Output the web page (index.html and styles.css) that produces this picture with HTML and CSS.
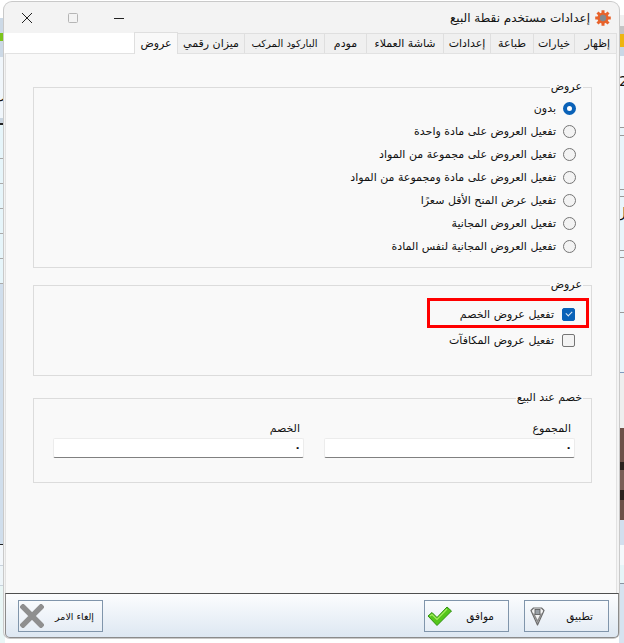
FILE: index.html
```html
<!DOCTYPE html>
<html lang="ar">
<head>
<meta charset="utf-8">
<title>إعدادات مستخدم نقطة البيع</title>
<link rel="stylesheet" href="styles.css">
</head>
<body>
<div class="desktop">
  <div class="strip strip-left"><span class="frag frag-l">ل</span></div>
  <div class="strip strip-right"><span class="frag frag-two">2</span><span class="frag frag-j">ل</span></div>

  <main class="window" dir="rtl">
    <header class="titlebar">
      <svg class="gear" viewBox="0 0 16 16" aria-hidden="true">
        <g stroke="#e8622a" stroke-width="3" stroke-linecap="butt">
          <path d="M8 0.2V15.8M0.2 8H15.8M2.5 2.5L13.5 13.5M13.5 2.5L2.5 13.5"/>
        </g>
        <circle cx="8" cy="8" r="5.6" fill="#e8622a"/>
        <circle cx="8" cy="8" r="3.2" fill="#85888d"/>
      </svg>
      <h1 class="title">إعدادات مستخدم نقطة البيع</h1>
      <div class="winctl">
        <svg class="ctl" viewBox="-17 0 46 12" aria-hidden="true"><path d="M1 6.5H11" stroke="#222" stroke-width="1" fill="none"/></svg>
        <svg class="ctl" viewBox="-17 0 46 12" aria-hidden="true"><rect x="1.5" y="1.5" width="9" height="9" rx="1" fill="none" stroke="#b5b5b5"/></svg>
        <svg class="ctl" viewBox="-17 0 46 12" aria-hidden="true"><path d="M1 1L11 11M11 1L1 11" stroke="#222" stroke-width="1" fill="none"/></svg>
      </div>
    </header>

    <nav class="tabs">
      <span class="tab">إظهار</span>
      <span class="tab">خيارات</span>
      <span class="tab">طباعة</span>
      <span class="tab">إعدادات</span>
      <span class="tab">شاشة العملاء</span>
      <span class="tab">مودم</span>
      <span class="tab tab-narrow">الباركود المركب</span>
      <span class="tab">ميزان رقمي</span>
      <span class="tab tab-active">عروض</span>
    </nav>

    <section class="panel">
      <fieldset class="group group-radio">
        <legend>عروض</legend>
        <label class="opt"><input type="radio" name="offer" checked><span>بدون</span></label>
        <label class="opt"><input type="radio" name="offer"><span>تفعيل العروض على مادة واحدة</span></label>
        <label class="opt"><input type="radio" name="offer"><span>تفعيل العروض على مجموعة من المواد</span></label>
        <label class="opt"><input type="radio" name="offer"><span>تفعيل العروض على مادة ومجموعة من المواد</span></label>
        <label class="opt"><input type="radio" name="offer"><span>تفعيل عرض المنح الأقل سعرًا</span></label>
        <label class="opt"><input type="radio" name="offer"><span>تفعيل العروض المجانية</span></label>
        <label class="opt"><input type="radio" name="offer"><span>تفعيل العروض المجانية لنفس المادة</span></label>
      </fieldset>

      <fieldset class="group group-check">
        <legend>عروض</legend>
        <label class="opt opt-check"><input type="checkbox" checked><span>تفعيل عروض الخصم</span><i class="redbox"></i></label>
        <label class="opt opt-check"><input type="checkbox"><span>تفعيل عروض المكافآت</span></label>
      </fieldset>

      <fieldset class="group group-fields">
        <legend>خصم عند البيع</legend>
        <div class="field">
          <label class="field-label">المجموع</label>
          <div class="input">٠</div>
        </div>
        <div class="field">
          <label class="field-label">الخصم</label>
          <div class="input">٠</div>
        </div>
      </fieldset>
    </section>

    <footer class="footer">
      <button class="btn btn-apply" type="button">
        <svg class="ico-apply" viewBox="0 0 15 19" aria-hidden="true">
          <path d="M1 3.5L3.5 1H11.5L14 3.5L7.5 18Z" fill="#f4f4f4" stroke="#6a6a6a" stroke-width="1.2" stroke-linejoin="round"/>
          <path d="M3.5 6.5L7.5 14.5L11.5 6.5" fill="none" stroke="#8a8a8a" stroke-width="1.5"/>
          <rect x="5" y="2.5" width="5" height="5" fill="#9aa0a6" stroke="#555" stroke-width=".8"/>
        </svg>
        <span>تطبيق</span>
      </button>
      <button class="btn btn-ok" type="button">
        <svg class="ico-ok" viewBox="0 0 25 20" aria-hidden="true">
          <path d="M1 10L5 6.5L10 11.5L20 1L24.5 5L10 19.5Z" fill="#55c61a" stroke="#2f8f10" stroke-width="1" stroke-linejoin="round"/>
          <path d="M3 10L5 8.5L10 13.5L20 3" fill="none" stroke="#a5ec5f" stroke-width="1.2"/>
        </svg>
        <span>موافق</span>
      </button>
      <button class="btn btn-cancel" type="button">
        <svg class="ico-x" viewBox="0 0 24 24" aria-hidden="true">
          <path d="M3 3L21 21M21 3L3 21" stroke="#8f8f8f" stroke-width="5.4" stroke-linecap="square" fill="none"/>
        </svg>
        <span>إلغاء الامر</span>
      </button>
    </footer>
  </main>
</div>
</body>
</html>
```
FILE: styles.css
```css
* { box-sizing: border-box; }
html, body { margin: 0; padding: 0; }
body {
  width: 624px;
  height: 643px;
  overflow: hidden;
  background: #fff;
  font-family: "DejaVu Sans", "Noto Sans", sans-serif;
  font-size: 11px;
  color: #111;
}
.desktop { position: relative; width: 624px; height: 643px; overflow: hidden; }

.strip { position: absolute; top: 0; width: 5px; height: 643px; overflow: hidden; }
.strip-left {
  left: 0;
  background: linear-gradient(to bottom,
    #fff 0 18px, #ccd9e6 18px 33px, #7cc41c 33px 41px, #ccd9e6 41px 57px,
    #f0f6fb 57px 118px, #c9d5e0 118px 123px, #222 123px 125px,
    #e6f5fa 125px 158px, #aaa 158px 159px, #e6f5fa 159px 183px, #aaa 183px 184px,
    #e6f5fa 184px 208px, #aaa 208px 209px, #e6f5fa 209px 233px, #aaa 233px 234px,
    #e6f5fa 234px 258px, #aaa 258px 259px, #e6f5fa 259px 283px, #aaa 283px 284px,
    #d0deec 284px 544px, #222 544px 545px, #f3f7fb 545px 565px, #c8d2dc 565px 566px,
    #eef5f9 566px 585px, #c8d2dc 585px 586px, #e9f6f6 586px 643px);
}
.strip-right {
  right: 0;
  background: linear-gradient(to bottom,
    #fff 0 15px, #f0f0f0 15px 26px, #c4c4c4 26px 34px, #eeb510 34px 47px, #c9d7e6 47px 56px,
    #f5f9fd 56px 127px, #999 127px 128px, #e9f5fb 128px 135px, #999 135px 136px,
    #e9f5fb 136px 189px, #999 189px 190px, #e9f5fb 190px 196px, #999 196px 197px,
    #e9f5fb 197px 250px, #999 250px 251px, #e9f5fb 251px 257px, #999 257px 258px,
    #e9f5fb 258px 312px, #999 312px 313px, #e9f5fb 313px 372px, #7f99bd 372px 373px,
    #eeeeee 373px 428px, #6d5048 428px 462px, #2c211e 462px 470px, #7a5d55 470px 490px,
    #2c211e 490px 500px, #6d5048 500px 520px, #d2dfee 520px 545px, #f4f9fc 545px 565px,
    #e5f5f8 565px 583px, #8a94a0 583px 584px, #d6e3f0 584px 643px);
}
.frag { position: absolute; left: -1px; font-size: 14px; line-height: 16px; color: #111; }
.frag-l { top: 86px; left: -4px; }
.frag-two { top: 73px; left: 0; }
.frag-j { top: 205px; left: -3px; }

.window {
  position: absolute;
  left: 4px;
  top: 2px;
  width: 615px;
  height: 636px;
  display: flex;
  flex-direction: column;
  background: #f3f3f3;
  border-radius: 8px 8px 6px 6px;
  box-shadow: 0 0 0 1px #c9c9c9;
}

.titlebar {
  height: 31px;
  flex: none;
  display: flex;
  align-items: center;
  padding: 0 8px 0 0;
  gap: 5px;
}
.gear { width: 16px; height: 16px; flex: none; }
.title { margin: 0; font-size: 12px; font-weight: 400; line-height: 18px; color: #111; white-space: nowrap; }
.winctl { margin-right: auto; display: flex; }
.ctl { width: 46px; height: 12px; display: block; }

.tabs {
  flex: none;
  height: 20px;
  margin-right: 2px;
  display: grid;
  grid-template-columns: 42px 41px 43px 47px 77px 42px 80px 67px 44px 1fr;
  background: linear-gradient(to left, transparent 483px, #fff 483px);
}
.tab {
  display: flex;
  align-items: center;
  justify-content: center;
  font-size: 11px;
  line-height: 14px;
  white-space: nowrap;
  overflow: hidden;
  background: #f0f0f0;
  border: 1px solid #dfdfdf;
  border-left: 0;
  border-bottom: 0;
}
.tab:first-child { justify-content: flex-start; padding-right: 6px; }
.tab-narrow { font-size: 10px; }
.tab-active {
  background: #f9f9f9;
  border-left: 1px solid #dfdfdf;
  height: 22px;
  margin-top: -1px;
  position: relative;
  z-index: 1;
}

.panel {
  flex: 1;
  margin: 0 2px 0 1px;
  background: #f9f9f9;
  border: 1px solid #e2e2e2;
  border-bottom: 0;
  padding: 26px 24px 0 27px;
  display: flex;
  flex-direction: column;
}

.group {
  margin: 0;
  border: 1px solid #dcdcdc;
  border-radius: 0;
  padding: 0;
  min-width: 0;
  flex: none;
}
.group legend {
  margin-right: -8px;
  padding: 0 1px;
  font-size: 11px;
  line-height: 14px;
}
.group-radio legend { margin-right: -7px; }
.group-radio { height: 188px; padding: 3px 15px 0 0; display: flex; flex-direction: column; }
.group-check { height: 98px; margin-top: 10px; padding: 9px 16px 0 0; }
.group-fields {
  height: 92px;
  margin-top: 15px;
  padding: 17px 16px 0 16px;
  display: grid;
  grid-template-columns: 251px 251px;
  column-gap: 20px;
  align-content: start;
}

.opt { display: flex; align-items: center; height: 23px; font-size: 11px; gap: 7px; position: relative; }
.opt input {
  appearance: none;
  -webkit-appearance: none;
  margin: 0;
  flex: none;
  width: 13px;
  height: 13px;
  background: #f3f3f3;
  border: 1px solid #757575;
}
.opt input[type=radio] { border-radius: 50%; }
.opt input[type=radio]:checked { background: #fff; border: 4px solid #0a62b8; }
.opt-check { height: 26px; gap: 8px; }
.opt input[type=checkbox] { border-radius: 2px; position: relative; }
.opt input[type=checkbox]:checked { background: #0a62b8; border-color: #0a62b8; }
.opt input[type=checkbox]:checked::after {
  content: "";
  position: absolute;
  left: 3px;
  top: 2px;
  width: 5px;
  height: 3px;
  border-left: 1px solid #dfeaf6;
  border-bottom: 1px solid #dfeaf6;
  transform: rotate(-45deg);
}
.redbox {
  position: absolute;
  right: -14px;
  top: -3px;
  width: 162px;
  height: 30px;
  border: 3px solid #f00;
  pointer-events: none;
}

.field-label { display: block; font-size: 11px; line-height: 14px; padding-right: 4px; margin-bottom: 2px; }
.input {
  height: 20px;
  background: #fff;
  border: 1px solid #ececec;
  border-bottom: 1px solid #808080;
  border-radius: 2px;
  font-size: 11px;
  font-weight: 700;
  line-height: 18px;
  padding-right: 2px;
}

.footer {
  flex: none;
  height: 45px;
  margin-left: 1px;
  display: flex;
  align-items: flex-start;
  padding: 6px 9px 0 12px;
  background: linear-gradient(to bottom, #fcfdfe, #dde7f2);
  border: 1px solid #8b8b8b;
  border-top: 1px solid #4f4f4f;
  border-radius: 0 0 5px 5px;
}
.btn {
  width: 85px;
  height: 32px;
  padding: 0;
  border: 1px solid #8095ab;
  background: linear-gradient(to bottom, #f9fbfd, #e6edf5);
  font-family: inherit;
  font-size: 10.5px;
  color: #111;
  display: flex;
  align-items: center;
}
.btn-ok { margin-right: 15px; }
.btn-cancel { margin-right: auto; font-size: 9.5px; }
.btn span { white-space: nowrap; }
.btn-apply span { margin-right: 15px; }
.btn-ok span { margin-right: 14px; }
.btn-cancel span { margin-right: 8px; }
.btn svg { order: 2; margin-right: auto; }
.ico-apply { width: 15px; height: 19px; margin-left: 5px; }
.ico-ok { width: 25px; height: 20px; margin-left: 2px; }
.ico-x { width: 24px; height: 24px; margin-left: 1px; }
```
